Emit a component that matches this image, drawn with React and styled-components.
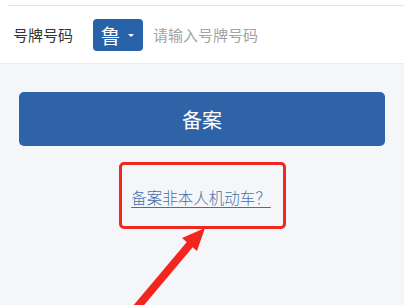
import styled, { createGlobalStyle } from 'styled-components';

const GlobalStyle = createGlobalStyle`
  html, body {
    margin: 0;
    padding: 0;
    background: #f5f6fa;
  }
  body {
    font-family: "Noto Sans CJK SC", "Noto Sans", sans-serif;
  }
`;

export default function App() {
  return (
    <Page>
      <GlobalStyle />
      <FormCard>
        <TopLine />
        <FieldRow>
          <Label>号牌号码</Label>
          <ProvinceSelect>
            鲁
            <Caret />
          </ProvinceSelect>
          <PlateInput placeholder="请输入号牌号码" />
        </FieldRow>
      </FormCard>

      <Main>
        <SubmitButton>备案</SubmitButton>
        <Highlight>
          <HelpLink href="#">备案非本人机动车？</HelpLink>
        </Highlight>
      </Main>

      {/* 标注箭头 */}
      <Arrow viewBox="0 0 404 305" width="404" height="305">
        <line x1="128" y1="318" x2="192" y2="242" stroke="#f2261f" strokeWidth="8" />
        <polygon points="205,228 182,238 197,251" fill="#f2261f" />
      </Arrow>
    </Page>
  );
}

const Page = styled.div`
  position: relative;
  width: 404px;
  height: 305px;
  overflow: hidden;
  background: #f5f6fa;
`;

const FormCard = styled.div`
  background: #fff;
  padding-top: 5px;
  border-bottom: 1px solid #e9eaef;
`;

const TopLine = styled.div`
  height: 1px;
  margin-left: 8px;
  background: #e4e4e4;
`;

const FieldRow = styled.div`
  display: flex;
  align-items: center;
  height: 57px;
  padding-left: 13px;
`;

const Label = styled.span`
  font-size: 15px;
  color: #333;
  width: 80px;
`;

const ProvinceSelect = styled.div`
  display: flex;
  align-items: center;
  justify-content: center;
  gap: 7px;
  width: 50px;
  height: 32px;
  box-sizing: border-box;
  padding-right: 2px;
  background: #2862a8;
  border-radius: 4px;
  color: #fff;
  font-size: 20px;
  margin-top: 1px;
`;

const Caret = styled.span`
  width: 0;
  height: 0;
  border-left: 3px solid transparent;
  border-right: 3px solid transparent;
  border-top: 3px solid #fff;
`;

const PlateInput = styled.input`
  border: none;
  outline: none;
  background: transparent;
  margin-left: 10px;
  padding: 0;
  font-family: inherit;
  font-size: 15px;
  flex: 1;
  &::placeholder {
    color: #a3a3a3;
  }
`;

const Main = styled.div`
  display: flex;
  flex-direction: column;
  align-items: center;
  padding: 28px 19px 0;
`;

const SubmitButton = styled.button`
  width: 100%;
  height: 54px;
  border: none;
  border-radius: 5px;
  background: #2e63a8;
  color: #fff;
  font-family: inherit;
  font-size: 20px;
`;

const Highlight = styled.div`
  display: flex;
  align-items: center;
  justify-content: center;
  width: 167px;
  height: 67px;
  box-sizing: border-box;
  margin-top: 16px;
  border: 3px solid #f0281f;
  border-radius: 5px;
  padding-top: 3px;
`;

const HelpLink = styled.a`
  color: #3f72a8;
  font-size: 15.5px;
  font-weight: 300;
  text-decoration: underline;
  text-underline-offset: 3px;
  margin-right: 2px;
`;

const Arrow = styled.svg`
  position: absolute;
  left: 0;
  top: 0;
  pointer-events: none;
`;
